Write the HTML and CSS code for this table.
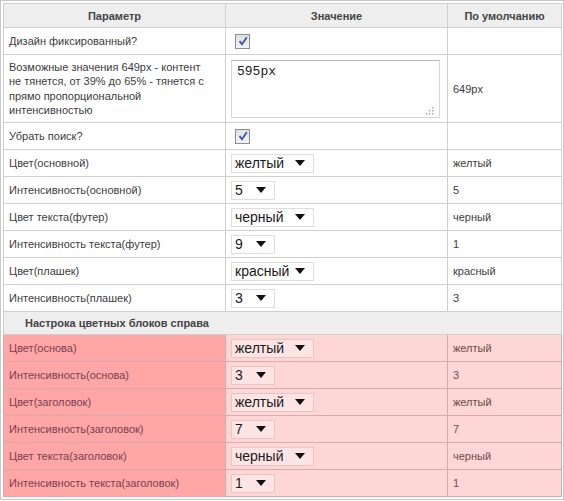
FILE: index.html
```html
<!DOCTYPE html>
<html lang="ru">
<head>
<meta charset="utf-8">
<link rel="stylesheet" href="styles.css">
</head>
<body>
<div class="frame">
<table class="settings">
  <colgroup><col class="c1"><col class="c2"><col class="c3"></colgroup>
  <tr class="head"><th>Параметр</th><th>Значение</th><th>По умолчанию</th></tr>
  <tr><td>Дизайн фиксированный?</td><td><span class="check"><svg width="12" height="12" viewBox="0 0 12 12"><path d="M2.5 6.2 L5 9.2 L9.8 2.2" fill="none" stroke="#3a5aa8" stroke-width="1.8"/></svg></span></td><td></td></tr>
  <tr class="tall"><td class="multi">Возможные значения 649px - контент не тянется, от 39% до 65% - тянется с прямо пропорциональной интенсивностью</td><td class="ta-cell"><div class="textarea">595px<svg class="grip" width="8" height="8" viewBox="0 0 8 8"><g fill="#aaa"><rect x="6" y="0" width="1.5" height="1.5"/><rect x="3" y="3" width="1.5" height="1.5"/><rect x="6" y="3" width="1.5" height="1.5"/><rect x="0" y="6" width="1.5" height="1.5"/><rect x="3" y="6" width="1.5" height="1.5"/><rect x="6" y="6" width="1.5" height="1.5"/></g></svg></div></td><td>649px</td></tr>
  <tr><td>Убрать поиск?</td><td><span class="check"><svg width="12" height="12" viewBox="0 0 12 12"><path d="M2.5 6.2 L5 9.2 L9.8 2.2" fill="none" stroke="#3a5aa8" stroke-width="1.8"/></svg></span></td><td></td></tr>
  <tr><td>Цвет(основной)</td><td><span class="sel wide">желтый<i class="arr"></i></span></td><td>желтый</td></tr>
  <tr><td>Интенсивность(основной)</td><td><span class="sel narrow">5<i class="arr"></i></span></td><td>5</td></tr>
  <tr><td>Цвет текста(футер)</td><td><span class="sel wide">черный<i class="arr"></i></span></td><td>черный</td></tr>
  <tr><td>Интенсивность текста(футер)</td><td><span class="sel narrow">9<i class="arr"></i></span></td><td>1</td></tr>
  <tr><td>Цвет(плашек)</td><td><span class="sel wide">красный<i class="arr"></i></span></td><td>красный</td></tr>
  <tr><td>Интенсивность(плашек)</td><td><span class="sel narrow">3<i class="arr"></i></span></td><td>3</td></tr>
  <tr class="section"><td colspan="3">Настрока цветных блоков справа</td></tr>
  <tr class="pink"><td>Цвет(основа)</td><td><span class="sel wide">желтый<i class="arr"></i></span></td><td>желтый</td></tr>
  <tr class="pink"><td>Интенсивность(основа)</td><td><span class="sel narrow">3<i class="arr"></i></span></td><td>3</td></tr>
  <tr class="pink"><td>Цвет(заголовок)</td><td><span class="sel wide">желтый<i class="arr"></i></span></td><td>желтый</td></tr>
  <tr class="pink"><td>Интенсивность(заголовок)</td><td><span class="sel narrow">7<i class="arr"></i></span></td><td>7</td></tr>
  <tr class="pink"><td>Цвет текста(заголовок)</td><td><span class="sel wide">черный<i class="arr"></i></span></td><td>черный</td></tr>
  <tr class="pink"><td>Интенсивность текста(заголовок)</td><td><span class="sel narrow">1<i class="arr"></i></span></td><td>1</td></tr>
</table>
</div>
</body>
</html>
```
FILE: styles.css
```css
html, body { margin: 0; padding: 0; background: #fff; }
body { font-family: Tahoma, "Liberation Sans", Arial, sans-serif; font-size: 11px; color: #3c3c3c; }
.frame { border: 1px solid #c8c8c8; padding: 2px; box-sizing: border-box; width: 564px; }
.settings { width: 558px; border-collapse: collapse; table-layout: fixed; }
.c1 { width: 222px; } .c2 { width: 222px; } .c3 { width: 114px; }
.settings td, .settings th { border: 1px solid #cfcfcf; padding: 0 5px; height: 26px; vertical-align: middle; text-align: left; }
.settings .head th { background: #eeeeee; height: 23px; text-align: center; font-weight: bold; color: #444; font-size: 11px; }
.settings .tall td { height: 67px; }
.settings .multi { line-height: 14.5px; padding-right: 16px; }
.settings .section td { background: #eeeeee; height: 22px; font-weight: bold; color: #444; padding-left: 21px; }
.settings .pink td { background: #ffd6d6; border-color: #d9aaaa; color: #6e4a4a; }
.settings .pink td:first-child { background: #ffa6a6; color: #7a4050; }
.check { display: inline-flex; align-items: center; justify-content: center; width: 13px; height: 13px; border: 1px solid #8e8e8e; background: linear-gradient(#dcdfe6, #f2f3f6); margin-left: 4px; vertical-align: middle; }
.textarea { display: flex; justify-content: space-between; width: 209px; height: 58px; box-sizing: border-box; border: 1px solid #d8d8d8; border-top-color: #b8b8b8; padding: 3px 5px 2px 5px; font-family: "Liberation Mono", "Courier New", monospace; font-size: 13px; color: #222; background: #fff; }
.grip { align-self: flex-end; }
.sel { display: inline-flex; align-items: center; justify-content: space-between; height: 19px; box-sizing: border-box; border: 1px solid #dedede; background: #fff; padding: 0 8px 0 3px; font-family: "Liberation Sans", Arial, sans-serif; font-size: 14px; color: #1a1a1a; vertical-align: middle; }
.pink .sel { background: #ffe4e4; border-color: #e8c4c4; }
.wide { width: 83px; } .narrow { width: 44px; }
.arr { display: block; width: 0; height: 0; border-left: 5px solid transparent; border-right: 5px solid transparent; border-top: 6px solid #111; }
```
